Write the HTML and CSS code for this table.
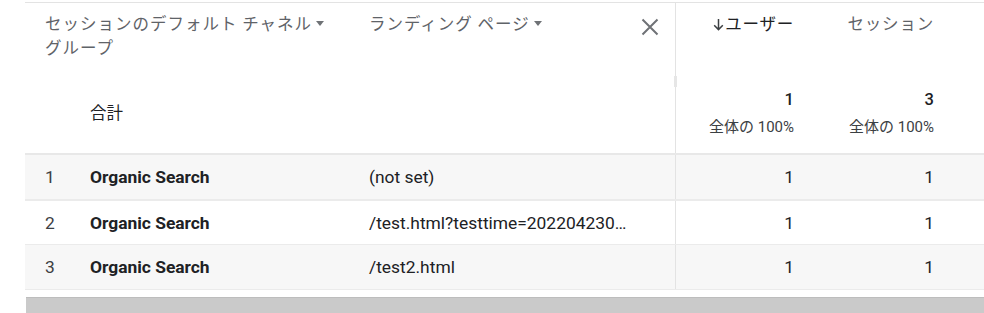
FILE: index.html
```html
<!DOCTYPE html>
<html lang="ja">
<head>
<meta charset="utf-8">
<link rel="stylesheet" href="styles.css">
</head>
<body>
<div class="wrap">
  <div class="table">
    <div class="head">
      <div class="hcell dimh">
        <span class="htext">セッションのデフォルト チャネル<span class="caret"></span><br>グループ</span>
      </div>
      <div class="hcell landh">
        <span class="htext">ランディング ページ<span class="caret"></span></span>
        <svg class="close" width="18" height="18" viewBox="0 0 18 18"><path d="M1.5 1.5 L16.5 16.5 M16.5 1.5 L1.5 16.5" stroke="#6f7276" stroke-width="2" fill="none"/></svg>
      </div>
      <div class="hcell metric sorted"><svg class="arrow" width="11" height="13" viewBox="0 0 11 13"><path d="M5.5 1 V11.5 M1.2 7.3 L5.5 11.6 L9.8 7.3" stroke="#3c4043" stroke-width="1.5" fill="none"/></svg>ユーザー</div>
      <div class="hcell metric">セッション</div>
      <div class="hcell rest"></div>

      <div class="tcell totlabel">合計</div>
      <div class="tcell landt"><span class="grip"></span></div>
      <div class="tcell total"><div class="tv">1</div><div class="tp">全体の 100%</div></div>
      <div class="tcell total"><div class="tv">3</div><div class="tp">全体の 100%</div></div>
      <div class="tcell rest"></div>
    </div>

    <div class="row shade">
      <div class="idx">1</div><div class="dim">Organic Search</div><div class="land">(not set)</div><div class="num sep">1</div><div class="num">1</div><div></div>
    </div>
    <div class="row white thick">
      <div class="idx">2</div><div class="dim">Organic Search</div><div class="land">/test.html?testtime=202204230…</div><div class="num sep">1</div><div class="num">1</div><div></div>
    </div>
    <div class="row shade">
      <div class="idx">3</div><div class="dim">Organic Search</div><div class="land">/test2.html</div><div class="num sep">1</div><div class="num">1</div><div></div>
    </div>
  </div>
  <div class="scrollbar"></div>
</div>
</body>
</html>
```

FILE: styles.css
```css
html, body {
  margin: 0;
  padding: 0;
  background: #ffffff;
}
body {
  font-family: Roboto, "Noto Sans CJK JP", sans-serif;
  color: #202124;
  width: 984px;
  height: 313px;
  overflow: hidden;
}
.wrap {
  padding-top: 2px;
  padding-left: 25px;
}
.table {
  border-top: 1px solid #e3e3e3;
}
.head {
  display: grid;
  grid-template-columns: 55px 275px 321px 134px 140px 1fr;
  grid-template-rows: 69px 81px;
  border-bottom: 2px solid #e8e8e8;
}
.hcell {
  font-family: "Noto Sans CJK JP", sans-serif;
  font-size: 16.5px;
  line-height: 24px;
  color: #5f6368;
  padding-top: 8px;
}
.dimh {
  grid-column: 1 / 3;
  padding-left: 20px;
  letter-spacing: 1px;
}
.landh {
  padding-left: 14px;
  display: flex;
  justify-content: space-between;
  align-items: flex-start;
  padding-right: 16px;
  border-right: 1px solid #e3e3e3;
  letter-spacing: 1px;
}
.close {
  margin-top: 7px;
}
.caret {
  display: inline-block;
  width: 0;
  height: 0;
  border-left: 4.5px solid transparent;
  border-right: 4.5px solid transparent;
  border-top: 5px solid #6f7276;
  margin-left: 4px;
  vertical-align: 4px;
}
.metric {
  text-align: right;
  padding-right: 16px;
  letter-spacing: 0.8px;
}
.sorted {
  color: #202124;
}
.arrow {
  margin-right: 1px;
  vertical-align: -1px;
}
.tcell {
  display: flex;
  flex-direction: column;
  justify-content: center;
}
.totlabel {
  grid-column: 1 / 3;
  padding-left: 65px;
  font-family: "Noto Sans CJK JP", sans-serif;
  font-size: 16.5px;
  padding-bottom: 2px;
}
.landt {
  border-right: 1px solid #e3e3e3;
  position: relative;
}
.grip {
  position: absolute;
  right: -2px;
  top: 4px;
  width: 3px;
  height: 11px;
  background: #e6e6e6;
}
.total {
  text-align: right;
  padding-right: 16px;
  padding-bottom: 0;
}
.tv {
  font-size: 16.5px;
  font-weight: 500;
  line-height: 22px;
  margin-bottom: 7px;
}
.tp {
  font-family: Roboto, "Noto Sans CJK JP", sans-serif;
  font-size: 15px;
  line-height: 18px;
  color: #3c4043;
}
.row {
  display: grid;
  grid-template-columns: 55px 275px 321px 134px 140px 1fr;
  height: 44px;
  align-items: center;
  font-size: 17.4px;
  border-bottom: 1px solid #ebebeb;
}
.row > div {
  height: 100%;
  display: flex;
  align-items: center;
}
.shade {
  background: #f7f7f7;
}
.white {
  background: #ffffff;
}
.thick {
  border-top: 1px solid #ebebeb;
  height: 43px;
}
.idx {
  padding-left: 20px;
  color: #3c4043;
}
.dim {
  padding-left: 10px;
  font-weight: 700;
  color: #202124;
}
.land {
  padding-left: 14px;
  color: #202124;
  border-right: 1px solid #e3e3e3;
}
.num {
  justify-content: flex-end;
  padding-right: 16px;
}
.scrollbar {
  margin-top: 7px;
  margin-left: 1px;
  height: 17px;
  background: #cacaca;
  border-top: 1px solid #bdbdbd;
}
```
